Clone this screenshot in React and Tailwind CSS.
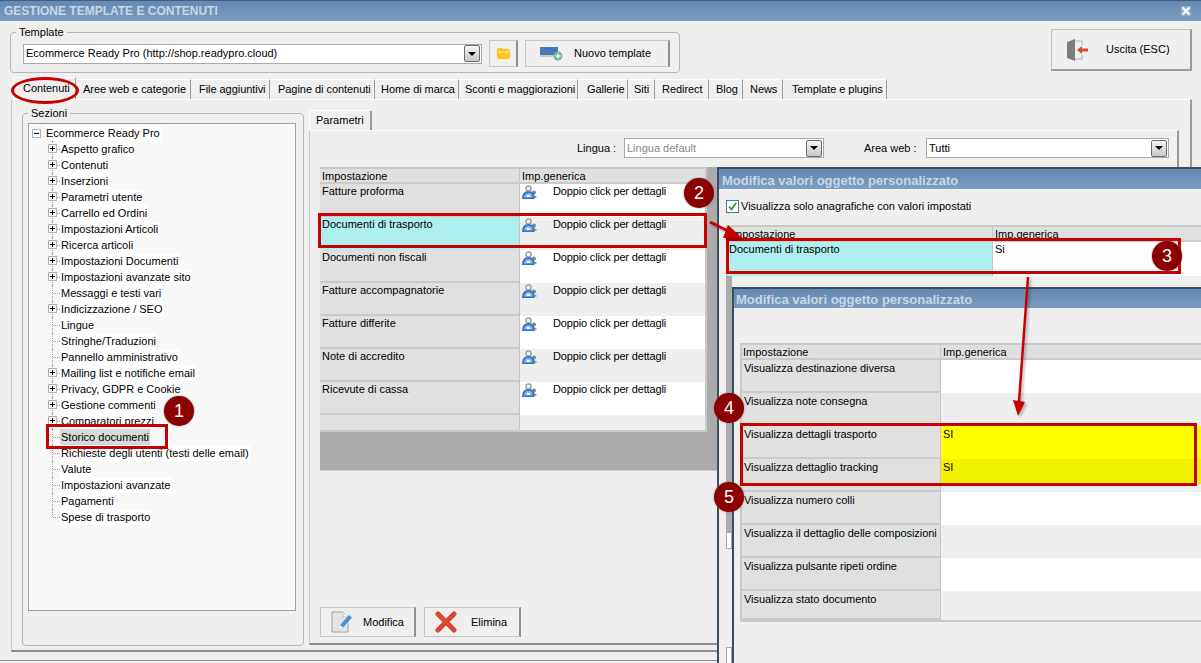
import React from "react";

const titleBar = "bg-gradient-to-b from-[#6388b1] to-[#7c9dc3] text-[#c9d6e6] font-bold";

function Arrow() {
  return (
    <span className="flex-none w-[16px] h-[17px] border border-[#6d6d6d] rounded-[2px] bg-gradient-to-b from-[#f4f4f4] to-[#c9c9c9] flex items-center justify-center">
      <span className="w-0 h-0 border-l-[4px] border-r-[4px] border-t-[4px] border-l-transparent border-r-transparent border-t-black" />
    </span>
  );
}

function Select({ className, text, muted }) {
  return (
    <div className={`flex items-center justify-between bg-white border border-[#a9a9a9] pl-[2px] pr-[1px] ${className}`}>
      <span className={muted ? "text-[#7f8a8f]" : "text-black"}>{text}</span>
      <Arrow />
    </div>
  );
}

function Users() {
  return (
    <svg width="15" height="14" viewBox="0 0 15 14" className="flex-none ml-[1px] mt-[1px]">
      <circle cx="12" cy="7.500" r="2" fill="#7f858c" />
      <path d="M10 13v-2q2-1 4.500 0v2z" fill="#9a9fa6" />
      <circle cx="6.500" cy="3.500" r="2.600" fill="#eef1f4" stroke="#8e97a2" strokeWidth="1.300" />
      <path d="M1 13.500q0-6.500 5.500-6.500t5 6.500z" fill="#8fb8e6" stroke="#2f76c8" strokeWidth="2" />
      <rect x="5" y="10" width="3" height="2" fill="#fff" />
    </svg>
  );
}

const mainRows = [
  ["Fatture proforma", "bg-white"],
  ["Documenti di trasporto", "bg-[#efefef]", true],
  ["Documenti non fiscali", "bg-white"],
  ["Fatture accompagnatorie", "bg-[#efefef]"],
  ["Fatture differite", "bg-white"],
  ["Note di accredito", "bg-[#efefef]"],
  ["Ricevute di cassa", "bg-white"],
];

const subRows = [
  ["Visualizza destinazione diversa", "bg-white", "", false, "h-[33px]"],
  ["Visualizza note consegna", "bg-[#efefef]", "", false, "h-[33px]"],
  ["Visualizza dettagli trasporto", "bg-[#ffff00]", "SI", false, "h-[33px]"],
  ["Visualizza dettaglio tracking", "bg-[#efefef]", "SI", true, "h-[33px]"],
  ["Visualizza numero colli", "bg-white", "", false, "h-[33px]"],
  ["Visualizza il dettaglio delle composizioni", "bg-[#efefef]", "", false, "h-[33px]"],
  ["Visualizza pulsante ripeti ordine", "bg-white", "", false, "h-[33px]"],
  ["Visualizza stato documento", "bg-[#efefef]", "", false, "h-[29px]"],
];

const tabs = [
  ["Contenuti", "w-[63px] h-[22px] -mt-[2px] pl-[9px] border-t border-l"],
  ["Aree web e categorie", "w-[115px] h-[20px] pl-[7px]"],
  ["File aggiuntivi", "w-[79px] h-[20px] pl-[8px]"],
  ["Pagine di contenuti", "w-[105px] h-[20px] pl-[8px]"],
  ["Home di marca", "w-[84px] h-[20px] pl-[6px]"],
  ["Sconti e maggiorazioni", "w-[119px] h-[20px] pl-[6px]"],
  ["Gallerie", "w-[50px] h-[20px] pl-[9px]"],
  ["Siti", "w-[27px] h-[20px] pl-[6px]"],
  ["Redirect", "w-[54px] h-[20px] pl-[7px]"],
  ["Blog", "w-[34px] h-[20px] pl-[7px]"],
  ["News", "w-[40px] h-[20px] pl-[7px]"],
  ["Template e plugins", "w-[104px] h-[20px] pl-[9px]"],
];

const tree = [
  ["Aspetto grafico", 1], ["Contenuti", 1], ["Inserzioni", 1], ["Parametri utente", 1],
  ["Carrello ed Ordini", 1], ["Impostazioni Articoli", 1], ["Ricerca articoli", 1],
  ["Impostazioni Documenti", 1], ["Impostazioni avanzate sito", 1], ["Messaggi e testi vari", 0],
  ["Indicizzazione / SEO", 1], ["Lingue", 0], ["Stringhe/Traduzioni", 0], ["Pannello amministrativo", 0],
  ["Mailing list e notifiche email", 1], ["Privacy, GDPR e Cookie", 1], ["Gestione commenti", 1],
  ["Comparatori prezzi", 1], ["Storico documenti", 0, true], ["Richieste degli utenti (testi delle email)", 0],
  ["Valute", 0], ["Impostazioni avanzate", 0], ["Pagamenti", 0], ["Spese di trasporto", 0],
];

function Expander({ open }) {
  return (
    <span className="relative w-[9px] h-[9px] border border-[#b4b4b4] bg-white block">
      <span className="absolute left-[1px] top-[3px] w-[5px] h-[1px] bg-black" />
      {!open && <span className="absolute left-[3px] top-[1px] w-[1px] h-[5px] bg-black" />}
    </span>
  );
}

function TreeRow({ label, plus, selected, last }) {
  return (
    <div className="flex h-[16px] ml-[23px]">
      <div className={`relative w-[8px] flex-none ${last ? "h-[8px]" : "h-[16px]"} border-l border-dotted border-[#a0a0a0]`}>
        <span className="absolute left-0 top-[8px] w-[7px] border-t border-dotted border-[#a0a0a0]" />
        {plus ? <span className="absolute -left-[5px] top-[3px]"><Expander /></span> : null}
      </div>
      <span className={`px-[1px] leading-[16px] whitespace-nowrap ${selected ? "bg-[#d9d9d9]" : "bg-white"}`}>{label}</span>
    </div>
  );
}

function Circle({ n, className }) {
  return (
    <div className={`absolute w-[30px] h-[30px] rounded-full bg-[#8b0000] text-white text-[18px] leading-[30px] text-center shadow-[0_0_2px_#777] ${className}`}>
      {n}
    </div>
  );
}

function RedBox({ className }) {
  return <div className={`absolute border-[3px] border-[#c80000] ${className}`} />;
}

function Btn({ className, children }) {
  return (
    <div className={`flex items-center border border-[#c6c6c6] border-r-[#8f8f8f] border-r-2 bg-[#efefef] ${className}`}>
      {children}
    </div>
  );
}

function Header({ left, right, leftW, pad }) {
  return (
    <div className="flex h-[15px] bg-[#e0e0e0] border-b-2 border-[#cacaca] leading-[14px]">
      <div className={`${leftW} ${pad} flex-none border-r border-[#c4c4c4]`}>{left}</div>
      <div className="pl-[2px] flex-1">{right}</div>
    </div>
  );
}

export default function App() {
  return (
    <div className="relative w-[1201px] h-[663px] overflow-hidden bg-[#efefef] text-[11px] text-black font-['Liberation_Sans',sans-serif]">
      <div className={`h-[21px] border-t border-[#3f5f85] flex items-center justify-between pl-[4px] pr-[10px] text-[12px] ${titleBar}`}>
        <span>GESTIONE TEMPLATE E CONTENUTI</span>
        <span className="w-[10px] h-[10px] flex items-center justify-center bg-[#8ca9c9]">
          <svg width="10" height="10" viewBox="0 0 10 10"><path d="M1.500 1.500l7 7M8.500 1.500l-7 7" stroke="#fff" strokeWidth="2.400" /></svg>
        </span>
      </div>

      <div className="flex items-start pl-[10px] pr-[9px] h-[58px]">
        <div className="relative mt-[11px] w-[670px] h-[41px] border border-[#b5b5b5] rounded-[4px] flex items-center pl-[12px] pt-[2px]">
          <span className="absolute left-[5px] -top-[7px] bg-[#efefef] px-[3px] leading-[13px]">Template</span>
          <Select className="w-[459px] h-[20px]" text="Ecommerce Ready Pro (http://shop.readypro.cloud)" />
          <Btn className="ml-[7px] w-[29px] h-[27px] justify-center">
            <svg width="15" height="13" viewBox="0 0 15 13">
              <path d="M1 3q0-2 2-2h3l1.500 1H12q2 0 2 2v6q0 2-2 2H3q-2 0-2-2z" fill="#ffc31c" />
              <path d="M2 5h11" stroke="#ffe9a8" strokeWidth="1.500" />
            </svg>
          </Btn>
          <Btn className="ml-[7px] w-[145px] h-[27px] pl-[14px]">
            <svg width="24" height="14" viewBox="0 0 24 14" className="flex-none">
              <rect x="0" y="0" width="18" height="8" fill="#4477bd" />
              <rect x="0" y="8" width="18" height="2" fill="#c9c9c9" />
              <circle cx="18" cy="9" r="4.500" fill="#6fb596" />
              <path d="M18 6.500v5M15.500 9h5" stroke="#fff" strokeWidth="1.400" />
            </svg>
            <span className="ml-[10px]">Nuovo template</span>
          </Btn>
        </div>
        <div className="ml-auto mt-[8px] w-[141px] h-[42px] border border-[#c0c0c0] border-b-2 border-b-[#9a9a9a] border-r-2 border-r-[#9a9a9a] flex items-center pl-[14px]">
          <svg width="22" height="24" viewBox="0 0 22 24" className="flex-none">
            <path d="M1 4l8-3v22l-8-3z" fill="#7d7d7d" />
            <path d="M9 3h7v4M16 17v4H9" fill="none" stroke="#b4b4b4" strokeWidth="1.200" />
            <path d="M11 12l5-4v2.500h6v3h-6V16z" fill="#d9492f" />
          </svg>
          <span className="ml-[18px]">Uscita (ESC)</span>
        </div>
      </div>

      <div className="flex items-end pl-[13px] h-[20px]">
        {tabs.map(([t, c], i) => (
          <div key={t} className={`${c} flex-none border-r border-[#9a9a9a] border-t border-t-white flex items-center whitespace-nowrap tracking-[-0.05px] ${i === 0 ? "rounded-t-[3px] border-l-white" : ""}`}>
            {t}
          </div>
        ))}
      </div>

      <div className="ml-[11px] w-[1181px] h-[553px] border-t border-t-white border-l border-l-[#c8c8c8] border-r-2 border-r-[#9a9a9a] border-b-2 border-b-[#8c8c8c] flex pl-[10px] pt-[13px]">
        <div className="relative w-[282px] h-[533px] flex-none border border-[#b5b5b5] rounded-[4px] pt-[9px] pl-[5px]">
          <span className="absolute left-[5px] -top-[7px] bg-[#efefef] px-[3px] leading-[13px]">Sezioni</span>
          <div className="w-[268px] h-[488px] border border-[#a0a0a0] bg-[#f8f8f8] pt-[1px]">
            <div className="flex items-center h-[16px] ml-[3px]">
              <Expander open />
              <span className="ml-[4px] px-[1px] bg-white leading-[16px]">Ecommerce Ready Pro</span>
            </div>
            {tree.map(([l, p, s], i) => (
              <TreeRow key={l} label={l} plus={p} selected={s} last={i === tree.length - 1} />
            ))}
          </div>
        </div>

        <div className="ml-[5px] flex-1 -mt-[3px] pr-[11px]">
          <div className="h-[20px] w-[63px] pl-[6px] border-t border-l border-r-2 border-white border-r-[#9a9a9a] rounded-t-[3px] flex items-center">Parametri</div>
          <div className="h-[515px] border-t border-t-white border-l border-l-[#c8c8c8] border-r-2 border-r-[#9a9a9a] border-b-2 border-b-[#8c8c8c] pt-[7px] pl-[10px]">
            <div className="flex items-center h-[20px]">
              <span className="ml-[257px] w-[47px]">Lingua :</span>
              <Select className="w-[200px] h-[20px]" text="Lingua default" muted />
              <span className="ml-[40px] w-[62px]">Area web :</span>
              <Select className="w-[243px] h-[20px] border-[#8a8a8a]" text="Tutti" />
            </div>

            <div className="mt-[9px] h-[304px] bg-[#ababab] w-[398px] border-b border-[#c9c9c9]">
              <div className="w-[387px] border-2 border-[#c9c9c9] border-l-0 bg-[#efefef]">
                <Header left="Impostazione" right="Imp.generica" leftW="w-[200px]" pad="pl-[2px]" />
                {mainRows.map(([l, bg, sel]) => (
                  <div key={l} className="flex h-[33px]">
                    <div className={`w-[200px] flex-none pl-[2px] leading-[15px] border-r border-[#c4c4c4] border-b-2 ${sel ? "bg-[#aeeeee] border-b-[#aeeeee]" : "bg-[#e0e0e0] border-b-[#cacaca]"}`}>{l}</div>
                    <div className={`flex-1 flex items-start pl-[1px] leading-[15px] ${bg}`}>
                      <Users />
                      <span className="ml-[16px] tracking-[-0.15px]">Doppio click per dettagli</span>
                    </div>
                  </div>
                ))}
                <div className="flex h-[15px]">
                  <div className="w-[200px] flex-none bg-[#e0e0e0] border-r border-[#c4c4c4]" />
                  <div className="flex-1 bg-[#efefef]" />
                </div>
              </div>
            </div>

            <div className="flex gap-[8px] mt-[136px]">
              <Btn className="w-[96px] h-[30px] pl-[10px]">
                <svg width="22" height="22" viewBox="0 0 22 22" className="flex-none">
                  <path d="M1 1h11l5 5v15H1z" fill="#e4e4e4" stroke="#8d8d8d" strokeWidth="0.800" />
                  <path d="M12 1v5h5" fill="#fff" stroke="#b0b0b0" strokeWidth="0.800" />
                  <path d="M7 19l2-5 9-10 3 2.500-9 10z" fill="#4b8fd6" />
                  <path d="M7 19l2-5 3 2.500z" fill="#fff" />
                </svg>
                <span className="ml-[10px]">Modifica</span>
              </Btn>
              <Btn className="w-[97px] h-[30px] pl-[10px]">
                <svg width="22" height="22" viewBox="0 0 22 22" className="flex-none">
                  <path d="M3 3l16 16M19 3L3 19" stroke="#d9492f" strokeWidth="5" strokeLinecap="round" />
                </svg>
                <span className="ml-[14px]">Elimina</span>
              </Btn>
            </div>
          </div>
        </div>
      </div>
      <div className="mt-[8px] h-[1px] bg-[#8c8c8c]" />

      {/* window 2 */}
      <div className="absolute left-[717px] top-[167px] w-[484px] h-[496px] border-l-2 border-t-2 border-[#3d4d5e] bg-[#efefef]">
        <div className={`h-[20px] pl-[3px] text-[13px] leading-[23px] ${titleBar}`}>Modifica valori oggetto personalizzato</div>
        <div className="flex items-center h-[13px] mt-[11px] ml-[7px]">
          <span className="w-[13px] h-[13px] border border-[#4a7a9a] bg-white flex items-center justify-center">
            <svg width="9" height="9" viewBox="0 0 9 9"><path d="M1 4.500l2.500 3L8 1" fill="none" stroke="#21a52c" strokeWidth="1.800" /></svg>
          </span>
          <span className="ml-[2px]">Visualizza solo anagrafiche con valori impostati</span>
        </div>
        <div className="ml-[7px] mt-[12px] border-t-2 border-l-2 border-[#c9c9c9]">
          <Header left="Impostazione" right="Imp.generica" leftW="w-[265px]" pad="pl-[2px]" />
          <div className="flex h-[34px]">
            <div className="w-[265px] flex-none bg-[#aeeeee] pl-[1px] leading-[14px] border-r border-[#c4c4c4]">Documenti di trasporto</div>
            <div className="flex-1 bg-white pl-[2px] leading-[14px]">Si</div>
          </div>
        </div>
        <div className="ml-[7px] w-[6px] h-[256px] bg-[#ababab]" />
        <div className="ml-[7px] w-[6px] h-[17px] bg-white border border-[#a8a8a8]" />
        <div className="ml-[7px] mt-[98px] w-[6px] h-[18px] bg-white border border-[#a8a8a8]" />
      </div>

      {/* window 3 */}
      <div className="absolute left-[732px] top-[287px] w-[469px] h-[376px] border-l-2 border-t-2 border-[#3d4d5e] bg-[#efefef]">
        <div className={`h-[19px] pl-[2px] text-[13px] leading-[21px] ${titleBar}`}>Modifica valori oggetto personalizzato</div>
        <div className="ml-[6px] mt-[35px] border-t-2 border-l-2 border-b-2 border-[#c9c9c9]">
          <Header left="Impostazione" right="Imp.generica" leftW="w-[199px]" pad="pl-[1px]" />
          {subRows.map(([l, bg, v, partial, h]) => (
            <div key={l} className={`flex ${h}`}>
              <div className="w-[199px] flex-none pl-[2px] leading-[16px] bg-[#e0e0e0] border-r border-[#c4c4c4] border-b-2 border-b-[#cacaca] tracking-[-0.05px]">{l}</div>
              <div className={`flex-1 pl-[2px] leading-[16px] ${bg}`}>
                {partial ? <div className="-ml-[2px] pl-[2px] h-[25px] bg-[#f2f200]">{v}</div> : v}
              </div>
            </div>
          ))}
        </div>
      </div>

      {/* annotations */}
      <div className="absolute left-[11px] top-[77px] w-[68px] h-[27px] rounded-[50%] border-[3px] border-[#c80000]" />
      <RedBox className="left-[46px] top-[424px] w-[122px] h-[25px]" />
      <RedBox className="left-[318px] top-[213px] w-[389px] h-[35px]" />
      <RedBox className="left-[726px] top-[238px] w-[455px] h-[36px]" />
      <RedBox className="left-[740px] top-[423px] w-[457px] h-[63px]" />
      <svg width="1201" height="663" viewBox="0 0 1201 663" className="absolute inset-0 pointer-events-none drop-shadow-[2px_2px_1px_rgba(0,0,0,0.25)]">
        <path d="M710 222L728 231" stroke="#c80000" strokeWidth="3" />
        <path d="M742 238L723 238L728 225z" fill="#c80000" />
        <path d="M1028 277L1019 402" stroke="#c80000" strokeWidth="2.500" />
        <path d="M1018 416L1013 400L1025 402z" fill="#c80000" />
      </svg>
      <Circle n="1" className="left-[164px] top-[396px]" />
      <Circle n="2" className="left-[684px] top-[178px]" />
      <Circle n="3" className="left-[1152px] top-[241px]" />
      <Circle n="4" className="left-[714px] top-[393px]" />
      <Circle n="5" className="left-[714px] top-[482px]" />
    </div>
  );
}
